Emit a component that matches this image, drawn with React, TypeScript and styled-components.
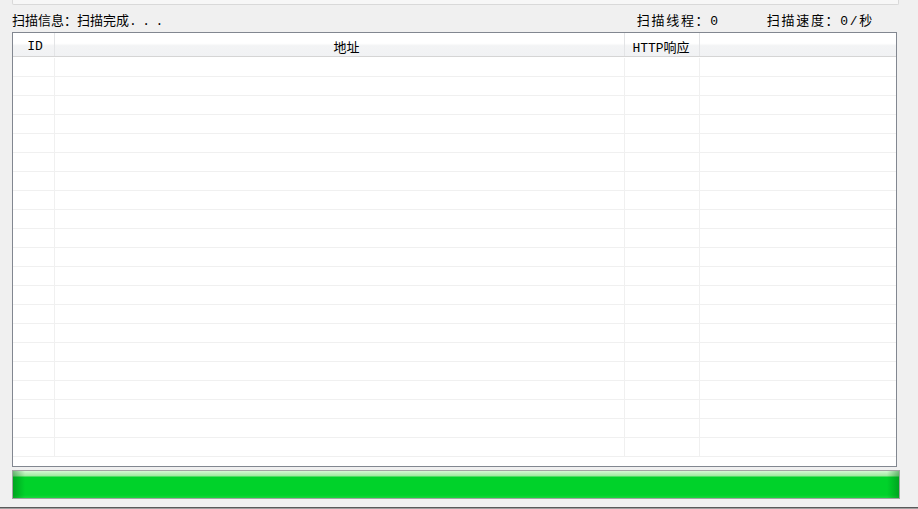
import styled, { createGlobalStyle } from 'styled-components';

const GlobalStyle = createGlobalStyle`
  html, body {
    margin: 0;
    padding: 0;
    background: #f0f0f0;
  }
`;

const columns = [
  { key: 'id', title: 'ID', width: 42, shift: 3 },
  { key: 'url', title: '地址', width: 570, shift: 14 },
  { key: 'http', title: 'HTTP响应', width: 75, shift: -2 },
  { key: 'extra', title: '', width: 196, shift: 0 },
];

const ROW_COUNT = 21;

export default function App() {
  return (
    <>
      <GlobalStyle />
      <Window>
        <TopPanel />
        <StatusBar>
          <StatusText>
            扫描信息：扫描完成<Dots>...</Dots>
          </StatusText>
          <StatusRight>
            <StatusText $spaced>扫描线程：0</StatusText>
            <StatusText $spaced>扫描速度：0/秒</StatusText>
          </StatusRight>
        </StatusBar>
        <Table>
          <HeaderRow>
            {columns.map((c) => (
              <HeaderCell key={c.key} $width={c.width} $shift={c.shift}>
                {c.title}
              </HeaderCell>
            ))}
          </HeaderRow>
          <Body>
            {Array.from({ length: ROW_COUNT }).map((_, i) => (
              <Row key={i}>
                {columns.map((c) => (
                  <Cell key={c.key} $width={c.width} />
                ))}
              </Row>
            ))}
          </Body>
        </Table>
        <Progress>
          <ProgressFill />
        </Progress>
        <BottomEdge />
      </Window>
    </>
  );
}

const Window = styled.div`
  width: 918px;
  height: 509px;
  display: flex;
  flex-direction: column;
  background: #f0f0f0;
  font-family: 'Liberation Mono', 'Noto Sans CJK SC', monospace;
  font-size: 13px;
  color: #000;
  overflow: hidden;
`;

const TopPanel = styled.div`
  height: 4px;
  margin: 0 19px 0 12px;
  background: #f7f7f7;
  border: 1px solid #d9d9d9;
  border-top: none;
  border-radius: 0 0 2px 2px;
`;

const StatusBar = styled.div`
  height: 27px;
  display: flex;
  align-items: center;
  justify-content: space-between;
  padding: 0 44px 0 12px;
`;

const StatusRight = styled.div`
  display: flex;
  gap: 47px;
`;

const StatusText = styled.span<{ $spaced?: boolean }>`
  white-space: nowrap;
  line-height: 16px;
  padding-top: 7px;
  letter-spacing: ${(p) => (p.$spaced ? '1.7px' : '0')};
`;

const Dots = styled.span`
  letter-spacing: 5.5px;
`;

const Table = styled.div`
  margin-left: 12px;
  width: 883px;
  height: 433px;
  border: 1px solid #828790;
  background: #fff;
  overflow: hidden;
`;

const HeaderRow = styled.div`
  display: flex;
  height: 23px;
  border-bottom: 1px solid #d5d5d5;
  background: linear-gradient(#ffffff 0%, #ffffff 45%, #f3f4f5 55%, #f1f2f4 100%);
`;

const HeaderCell = styled.div<{ $width: number; $shift: number }>`
  width: ${(p) => p.$width}px;
  flex-shrink: 0;
  box-sizing: border-box;
  border-right: 1px solid #e3e4e6;
  display: flex;
  align-items: center;
  justify-content: center;
  padding-top: 4px;
  padding-left: ${(p) => Math.max(p.$shift, 0)}px;
  padding-right: ${(p) => Math.max(-p.$shift, 0)}px;
  white-space: nowrap;

  &:last-child {
    border-right: none;
  }
`;

const Body = styled.div`
  padding-top: 1px;
`;

const Row = styled.div`
  display: flex;
  height: 18px;
  border-bottom: 1px solid #f0f0f0;
`;

const Cell = styled.div<{ $width: number }>`
  width: ${(p) => p.$width}px;
  flex-shrink: 0;
  box-sizing: border-box;
  border-right: 1px solid #f0f0f0;

  &:last-child {
    border-right: none;
  }
`;

const Progress = styled.div`
  margin: 3px 0 0 12px;
  width: 886px;
  height: 27px;
  border: 1px solid #a3a3a3;
  background: #e6e6e6;
`;

const ProgressFill = styled.div`
  height: 100%;
  background:
    linear-gradient(90deg, rgba(0, 110, 20, 0.45) 0px, rgba(0, 110, 20, 0) 12px),
    linear-gradient(270deg, rgba(0, 110, 20, 0.45) 0px, rgba(0, 110, 20, 0) 12px),
    linear-gradient(
      #d4f8d4 0px,
      #b4f0b4 3px,
      #9ee89e 5px,
      #00d22a 6px,
      #00d22a 24px,
      #19d83c 27px
    );
`;

const BottomEdge = styled.div`
  margin-top: 8px;
  height: 1px;
  background: #5a5a5a;
  border-bottom: 1px solid #a0a0a0;
`;
